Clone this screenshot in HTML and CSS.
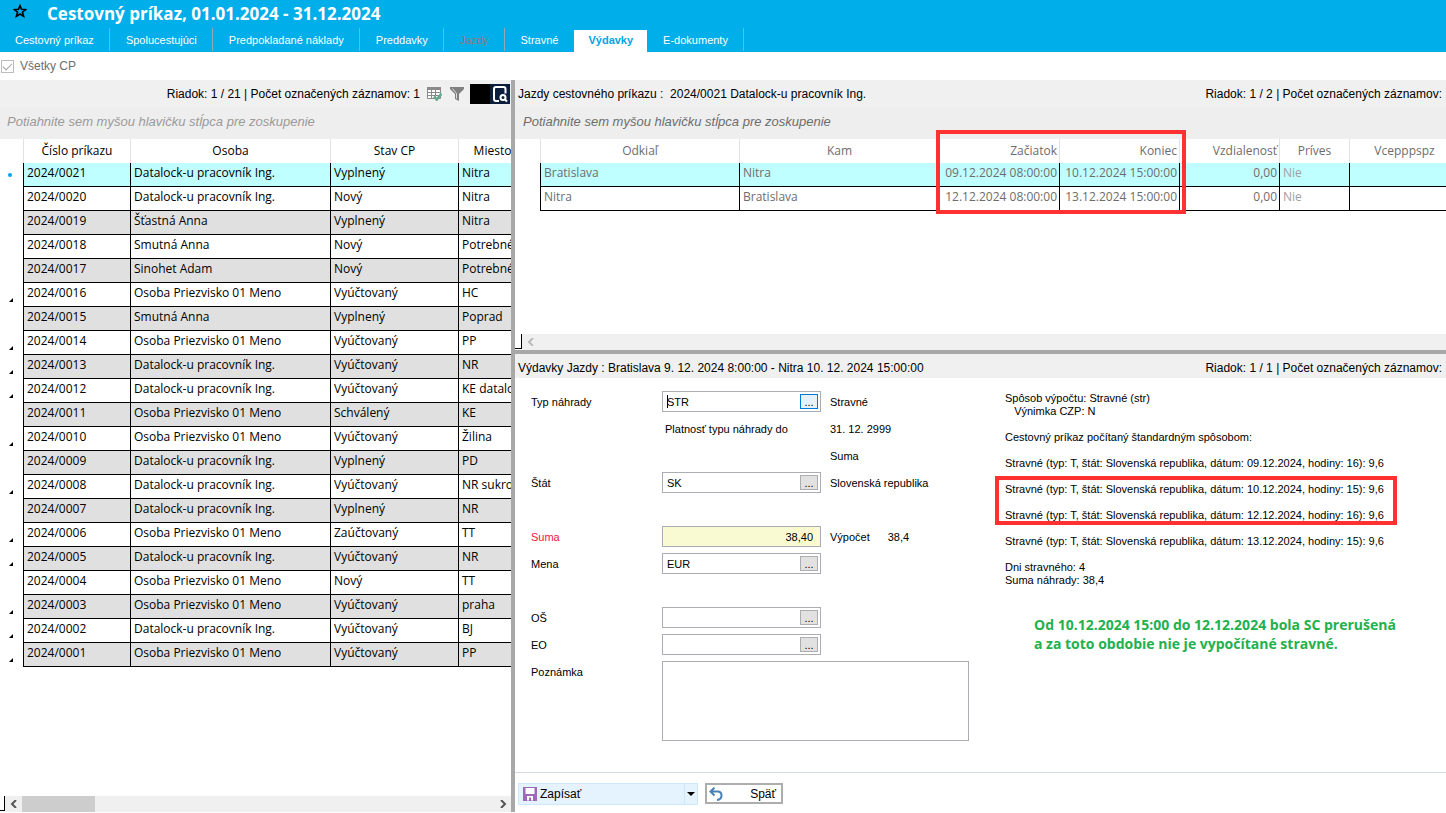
FILE: index.html
```html
<!DOCTYPE html>
<html lang="sk">
<head>
    <meta charset="UTF-8">
    <meta name="viewport" content="width=device-width, initial-scale=1.0">
    <title>Cestovný príkaz</title>
    <link rel="stylesheet" href="styles.css">
</head>
<body>
    <header class="header">
        <div class="title-row">
            <svg class="star" viewBox="0 0 14 14"><path d="M7 1.6 8.5 5.3 12.6 5.6 9.5 8.2 10.6 12.3 7 10 3.4 12.3 4.5 8.2 1.4 5.6 5.5 5.3Z" fill="none" stroke="#000" stroke-width="1.6"/></svg>
            <h1>Cestovný príkaz, 01.01.2024 - 31.12.2024</h1>
        </div>
        <nav class="tabs">
            <a href="#">Cestovný príkaz</a>
            <a href="#">Spolucestujúci</a>
            <a href="#">Predpokladané náklady</a>
            <a href="#">Preddavky</a>
            <a href="#" class="disabled">Jazdy</a>
            <a href="#" class="before-active">Stravné</a>
            <a href="#" class="active">Výdavky</a>
            <a href="#">E-dokumenty</a>
        </nav>
    </header>

    <div class="filter-row">
        <input type="checkbox" id="all-cp" checked disabled>
        <label for="all-cp">Všetky CP</label>
    </div>

    <main class="workspace">
        <section class="orders">
            <div class="status-bar">
                <span class="status-right">Riadok: 1 / 21 | Počet označených záznamov: 1</span>
                <svg class="icon-grid" viewBox="0 0 15 15">
                    <path d="M.5 1.5h13v11H.5z" fill="#fff" stroke="#8a8a8a"/>
                    <path d="M0 1h14v3H0z" fill="#8a8a8a"/>
                    <path d="M.5 6.5h13M.5 9.5h13M4.5 4v8M8.5 4v8" stroke="#8a8a8a" fill="none"/>
                    <path d="M7 10.5 9.8 13.5 14.5 7.500" stroke="#63aa8c" stroke-width="2.6" fill="none"/>
                </svg>
                <svg class="icon-filter" viewBox="0 0 14 14"><path d="M0 0h14v2L9 7v7l-4-2V7L0 2z" fill="#808080"/><path d="M2.5 1.5 6.5 6.5v5" stroke="#ddd" fill="none"/></svg>
                <span class="black-box">
                    <svg viewBox="0 0 20 20"><path d="M0 0h20v20H0z" fill="#0b1f3d"/><path d="M9 17H6Q4 17 4 15V5Q4 3 6 3H13.500Q15.500 3 15.500 5V9.500" fill="none" stroke="#fff" stroke-width="2"/><circle cx="13" cy="13.500" r="2.500" fill="none" stroke="#fff" stroke-width="2"/><path d="m14.500 15 2.500 2.500" stroke="#fff" stroke-width="2"/></svg>
                </span>
            </div>
            <div class="group-bar light">Potiahnite sem myšou hlavičku stĺpca pre zoskupenie</div>
            <div class="table-clip">
                <table class="data orders-table">
                    <colgroup><col class="w23"><col class="w107"><col class="w200"><col class="w128"><col class="w68"></colgroup>
                    <thead>
                        <tr><th></th><th>Číslo príkazu</th><th>Osoba</th><th>Stav CP</th><th>Miesto</th></tr>
                    </thead>
                    <tbody>
                        <tr class="current"><td><span class="dot"></span></td><td>2024/0021</td><td>Datalock-u pracovník Ing.</td><td>Vyplnený</td><td>Nitra</td></tr>
                        <tr><td></td><td>2024/0020</td><td>Datalock-u pracovník Ing.</td><td>Nový</td><td>Nitra</td></tr>
                        <tr><td></td><td>2024/0019</td><td>Šťastná Anna</td><td>Vyplnený</td><td>Nitra</td></tr>
                        <tr><td></td><td>2024/0018</td><td>Smutná Anna</td><td>Nový</td><td>Potrebné</td></tr>
                        <tr><td></td><td>2024/0017</td><td>Sinohet Adam</td><td>Nový</td><td>Potrebné</td></tr>
                        <tr><td><span class="mark"></span></td><td>2024/0016</td><td>Osoba Priezvisko 01 Meno</td><td>Vyúčtovaný</td><td>HC</td></tr>
                        <tr><td></td><td>2024/0015</td><td>Smutná Anna</td><td>Vyplnený</td><td>Poprad</td></tr>
                        <tr><td><span class="mark"></span></td><td>2024/0014</td><td>Osoba Priezvisko 01 Meno</td><td>Vyúčtovaný</td><td>PP</td></tr>
                        <tr><td><span class="mark"></span></td><td>2024/0013</td><td>Datalock-u pracovník Ing.</td><td>Vyúčtovaný</td><td>NR</td></tr>
                        <tr><td><span class="mark"></span></td><td>2024/0012</td><td>Datalock-u pracovník Ing.</td><td>Vyúčtovaný</td><td>KE datalo</td></tr>
                        <tr><td></td><td>2024/0011</td><td>Osoba Priezvisko 01 Meno</td><td>Schválený</td><td>KE</td></tr>
                        <tr><td><span class="mark"></span></td><td>2024/0010</td><td>Osoba Priezvisko 01 Meno</td><td>Vyúčtovaný</td><td>Žilina</td></tr>
                        <tr><td></td><td>2024/0009</td><td>Datalock-u pracovník Ing.</td><td>Vyplnený</td><td>PD</td></tr>
                        <tr><td><span class="mark"></span></td><td>2024/0008</td><td>Datalock-u pracovník Ing.</td><td>Vyúčtovaný</td><td>NR sukro</td></tr>
                        <tr><td></td><td>2024/0007</td><td>Datalock-u pracovník Ing.</td><td>Vyplnený</td><td>NR</td></tr>
                        <tr><td><span class="mark"></span></td><td>2024/0006</td><td>Osoba Priezvisko 01 Meno</td><td>Zaúčtovaný</td><td>TT</td></tr>
                        <tr><td><span class="mark"></span></td><td>2024/0005</td><td>Datalock-u pracovník Ing.</td><td>Vyúčtovaný</td><td>NR</td></tr>
                        <tr><td></td><td>2024/0004</td><td>Osoba Priezvisko 01 Meno</td><td>Nový</td><td>TT</td></tr>
                        <tr><td><span class="mark"></span></td><td>2024/0003</td><td>Osoba Priezvisko 01 Meno</td><td>Vyúčtovaný</td><td>praha</td></tr>
                        <tr><td><span class="mark"></span></td><td>2024/0002</td><td>Datalock-u pracovník Ing.</td><td>Vyúčtovaný</td><td>BJ</td></tr>
                        <tr><td><span class="mark"></span></td><td>2024/0001</td><td>Osoba Priezvisko 01 Meno</td><td>Vyúčtovaný</td><td>PP</td></tr>
                    </tbody>
                </table>
            </div>
            <div class="scroll-row">
                <span class="grip"></span>
                <div class="scrollbar">
                    <button class="arrow" aria-label="Doľava"><svg viewBox="0 0 8 8"><path d="M6 0 2 4l4 4" fill="none" stroke="#555" stroke-width="2"/></svg></button>
                    <span class="thumb"></span>
                    <button class="arrow" aria-label="Doprava"><svg viewBox="0 0 8 8"><path d="m2 0 4 4-4 4" fill="none" stroke="#555" stroke-width="2"/></svg></button>
                </div>
            </div>
        </section>

        <div class="details">
            <section class="trips">
                <div class="status-bar">
                    <span>Jazdy cestovného príkazu :&nbsp; 2024/0021 Datalock-u pracovník Ing.</span>
                    <span class="status-right">Riadok: 1 / 2 | Počet označených záznamov:</span>
                </div>
                <div class="group-bar">Potiahnite sem myšou hlavičku stĺpca pre zoskupenie</div>
                <div class="table-clip">
                    <table class="data trips-table">
                        <colgroup><col class="w25"><col class="w199"><col class="w200"><col class="w120"><col class="w120"><col class="w100"><col class="w70"><col class="w110"></colgroup>
                        <thead>
                            <tr><th></th><th>Odkiaľ</th><th>Kam</th><th class="num">Začiatok</th><th class="num">Koniec</th><th class="num">Vzdialenosť</th><th>Príves</th><th>Vcepppspz</th></tr>
                        </thead>
                        <tbody>
                            <tr class="current"><td></td><td>Bratislava</td><td>Nitra</td><td class="num">09.12.2024 08:00:00</td><td class="num">10.12.2024 15:00:00</td><td class="num">0,00</td><td class="faded">Nie</td><td></td></tr>
                            <tr><td></td><td>Nitra</td><td>Bratislava</td><td class="num">12.12.2024 08:00:00</td><td class="num">13.12.2024 15:00:00</td><td class="num">0,00</td><td class="faded">Nie</td><td></td></tr>
                        </tbody>
                    </table>
                </div>
                <div class="scroll-row">
                    <span class="grip"></span>
                    <div class="scrollbar">
                        <button class="arrow" aria-label="Doľava" disabled><svg viewBox="0 0 8 8"><path d="M6 0 2 4l4 4" fill="none" stroke="#bbb" stroke-width="2"/></svg></button>
                    </div>
                </div>
                <span class="highlight highlight-times"></span>
            </section>

            <section class="expenses">
                <div class="status-bar">
                    <span>Výdavky Jazdy : Bratislava 9. 12. 2024 8:00:00 - Nitra 10. 12. 2024 15:00:00</span>
                    <span class="status-right">Riadok: 1 / 1 | Počet označených záznamov:</span>
                </div>
                <div class="expense-body">
                    <form class="form" id="expense-form">
                        <label for="type">Typ náhrady</label>
                        <div class="field"><span class="caret"></span><input id="type" type="text" value="STR"><button type="button" class="pick focused">...</button></div>
                        <span class="hint">Stravné</span>

                        <span class="sub">Platnosť typu náhrady do</span>
                        <span class="hint">31. 12. 2999</span>

                        <span class="hint">Suma</span>

                        <label for="state">Štát</label>
                        <div class="field"><input id="state" type="text" value="SK"><button type="button" class="pick">...</button></div>
                        <span class="hint">Slovenská republika</span>

                        <span class="blank"></span>

                        <label for="sum" class="required">Suma</label>
                        <div class="field amount"><input id="sum" type="text" value="38,40"></div>
                        <span class="hint pair"><span>Výpočet</span><span>38,4</span></span>

                        <label for="currency">Mena</label>
                        <div class="field"><input id="currency" type="text" value="EUR"><button type="button" class="pick">...</button></div>

                        <span class="blank"></span>

                        <label for="os">OŠ</label>
                        <div class="field"><input id="os" type="text"><button type="button" class="pick">...</button></div>

                        <label for="eo">EO</label>
                        <div class="field"><input id="eo" type="text"><button type="button" class="pick">...</button></div>

                        <label for="note">Poznámka</label>
                        <textarea id="note"></textarea>
                    </form>

                    <div class="calc">
                        <p>Spôsob výpočtu: Stravné (str)<br>&nbsp;&nbsp; Výnimka CZP: N</p>
                        <p>Cestovný príkaz počítaný štandardným spôsobom:</p>
                        <p>Stravné (typ: T, štát: Slovenská republika, dátum: 09.12.2024, hodiny: 16): 9,6</p>
                        <p>Stravné (typ: T, štát: Slovenská republika, dátum: 10.12.2024, hodiny: 15): 9,6</p>
                        <p>Stravné (typ: T, štát: Slovenská republika, dátum: 12.12.2024, hodiny: 16): 9,6</p>
                        <p>Stravné (typ: T, štát: Slovenská republika, dátum: 13.12.2024, hodiny: 15): 9,6</p>
                        <p>Dni stravného: 4<br>Suma náhrady: 38,4</p>
                        <span class="highlight highlight-days"></span>
                        <div class="remark">Od 10.12.2024 15:00 do 12.12.2024 bola SC prerušená<br>a za toto obdobie nie je vypočítané stravné.</div>
                    </div>
                </div>
                <footer class="actions">
                    <div class="save-group">
                        <button class="save" form="expense-form">
                            <svg viewBox="0 0 14 14"><path d="M0 0h14v14H0z" fill="#9b6bb8"/><path d="M2.500 1h9v6h-9zM4 9h6v4.500H8V10.500H6v3H4z" fill="#fff"/></svg>
                            Zapísať
                        </button>
                        <button class="save-more" aria-label="Ďalšie možnosti"></button>
                    </div>
                    <button class="back">
                        <svg viewBox="0 0 14 14"><path d="M5.500.8 1.500 4.600l4 3.800M2 4.600h6.500q4 0 4 4T8 13" fill="none" stroke="#4a80b5" stroke-width="2"/></svg>
                        <span>Späť</span>
                    </button>
                </footer>
            </section>
        </div>
    </main>
</body>
</html>
```
FILE: styles.css
```css
* {
    box-sizing: border-box;
}

body {
    margin: 0;
    min-height: 100vh;
    display: flex;
    flex-direction: column;
    background: #fff;
    color: #000;
    font-family: "Liberation Sans", Arial, sans-serif;
    font-size: 12px;
    padding-bottom: 1px;
}

button,
input,
textarea {
    font: inherit;
    color: inherit;
}

button {
    padding: 0;
    border: none;
    cursor: pointer;
}

/* header */
.header {
    background: #00aeea;
    color: #fff;
}

.title-row {
    display: flex;
    align-items: center;
    height: 28px;
    padding-left: 13px;
    gap: 20px;
}

.star {
    width: 14px;
    height: 14px;
    margin-bottom: 6px;
}

h1 {
    margin: 0;
    font-family: "Open Sans", "Noto Sans", sans-serif;
    font-size: 17px;
    font-weight: 700;
    line-height: 24px;
}

.tabs {
    display: flex;
    gap: 1px;
    height: 24px;
    font-size: 11px;
}

.tabs a {
    padding: 0 15px;
    border-right: 1px solid #8fa9b5;
    margin-bottom: 1px;
    line-height: 24px;
    color: #fff;
    text-decoration: none;
    white-space: nowrap;
}

.tabs a.disabled {
    color: #8a7d7c;
}

.tabs a.before-active {
    border-right: none;
}

.tabs a.active {
    margin: 2px 0 0;
    padding: 0 14px;
    border: none;
    line-height: 20px;
    background: #fff;
    color: #00a5e3;
    font-weight: bold;
}

.filter-row {
    display: flex;
    align-items: center;
    gap: 6px;
    height: 28px;
    color: #6d6d6d;
}

.filter-row input {
    appearance: none;
    width: 13px;
    height: 13px;
    margin: 0 0 0 1px;
    border: 1px solid #bcbcbc;
    display: grid;
    place-items: center;
}

.filter-row input:checked::after {
    content: "";
    width: 8px;
    height: 4px;
    border-left: 1px solid #a0a0a0;
    border-bottom: 1px solid #a0a0a0;
    transform: translateY(-1px) rotate(-45deg);
}

/* panes */
.workspace {
    flex: 1;
    display: grid;
    grid-template-columns: 515px minmax(0, 1fr);
}

.orders {
    display: flex;
    flex-direction: column;
    min-width: 0;
    border-right: 4px solid #a8a8a8;
}

.details {
    display: flex;
    flex-direction: column;
    min-width: 0;
}

.trips {
    position: relative;
    display: flex;
    flex-direction: column;
    min-height: 274px;
    border-bottom: 4px solid #a8a8a8;
}

.expenses {
    flex: 1;
    display: flex;
    flex-direction: column;
}

.status-bar {
    display: flex;
    align-items: center;
    height: 24px;
    padding: 3px 4px 0 3px;
    background: #f0f0f0;
    white-space: nowrap;
}

.trips .status-bar,
.orders .status-bar {
    height: 27px;
    padding-top: 0;
}

.orders .status-bar {
    padding-right: 1px;
}

.status-right {
    margin-left: auto;
}

.icon-grid {
    width: 15px;
    height: 15px;
    margin-left: 7px;
}

.icon-filter {
    width: 14px;
    height: 14px;
    margin-left: 8px;
}

.black-box {
    display: flex;
    justify-content: flex-end;
    width: 40px;
    height: 20px;
    margin-left: 6px;
    background: #000;
}

.black-box svg {
    width: 20px;
    height: 20px;
}

.group-bar {
    height: 32px;
    padding-left: 8px;
    line-height: 29px;
    background: #eee;
    color: #6d6d6d;
    font-size: 13px;
    font-style: italic;
    white-space: nowrap;
}

.group-bar.light {
    padding-left: 7px;
    color: #9a9a9a;
}

.table-clip {
    flex: 1;
    overflow: hidden;
}

/* data tables */
.data {
    width: 0;
    table-layout: fixed;
    border-collapse: separate;
    border-spacing: 0;
    font-family: "Open Sans", "Noto Sans", sans-serif;
    font-size: 12px;
}

.w23 { width: 23px; }
.w25 { width: 25px; }
.w68 { width: 68px; }
.w70 { width: 70px; }
.w100 { width: 100px; }
.w107 { width: 107px; }
.w110 { width: 110px; }
.w120 { width: 120px; }
.w128 { width: 128px; }
.w199 { width: 199px; }
.w200 { width: 200px; }

.data th,
.data td {
    height: 24px;
    padding: 0 3px;
    overflow: hidden;
    white-space: nowrap;
}

.data th {
    padding-bottom: 2px;
    border-left: 1px solid #e2e2e2;
    font-weight: normal;
    text-align: center;
}

.data td {
    padding-bottom: 3px;
    border-left: 1px solid #000;
    border-bottom: 1px solid #000;
    line-height: 20px;
}

.data th:first-child,
.data td:first-child {
    padding: 0;
    border: none;
    background: #fff;
}

.data .num {
    padding-right: 2px;
    text-align: right;
}

.data tbody tr:nth-child(odd) td:not(:first-child) {
    background: #e0e0e0;
}

.data tbody tr.current td:not(:first-child) {
    background: #c0ffff;
}

.trips-table {
    color: #6d6d6d;
}

.data .faded {
    color: #a0a0a0;
}

.dot {
    display: block;
    width: 4px;
    height: 4px;
    margin-left: 8px;
    border-radius: 50%;
    background: #00a2e8;
}

.mark {
    display: block;
    width: 0;
    height: 0;
    margin: 9px 0 0 9px;
    border-left: 4px solid transparent;
    border-bottom: 4px solid #000;
}

/* scrollbars */
.scroll-row {
    display: flex;
    align-items: stretch;
    height: 16px;
}

.grip {
    width: 5px;
    height: 15px;
    border-right: 1px solid #000;
    border-bottom: 1px solid #000;
}

.trips .grip {
    width: 7px;
}

.scrollbar {
    flex: 1;
    display: flex;
    background: #f0f0f0;
}

.arrow {
    display: grid;
    place-items: center;
    width: 17px;
    background: none;
}

.arrow:last-child:not(:first-child) {
    margin-left: auto;
}

.arrow svg {
    width: 8px;
    height: 8px;
}

.thumb {
    width: 73px;
    background: #cdcdcd;
}

/* expense form */
.expense-body {
    flex: 1;
    display: flex;
    align-items: flex-start;
    padding: 13px 0 20px 16px;
    font-size: 11px;
}

.form {
    display: grid;
    grid-template-columns: 131px 159px 184px;
    grid-auto-rows: 21px;
    row-gap: 6px;
    line-height: 22px;
    white-space: nowrap;
}

.form label {
    grid-column: 1;
}

.form .required {
    color: #f0143c;
}

.field {
    grid-column: 2;
    position: relative;
    display: flex;
    align-items: center;
    padding: 0 2px 0 4px;
    border: 1px solid #abadb3;
    background: #fff;
}

.field input {
    flex: 1;
    min-width: 0;
    padding: 0;
    border: none;
    outline: none;
    background: none;
}

.caret {
    position: absolute;
    left: 4px;
    top: 3px;
    width: 1px;
    height: 13px;
    background: #000;
}

.amount {
    padding-right: 7px;
    background: #fafad2;
}

.amount input {
    text-align: right;
}

.pick {
    width: 18px;
    height: 15px;
    border: 1px solid #adadad;
    background: #e1e1e1;
    line-height: 12px;
}

.pick.focused {
    border-color: #0078d7;
    background: #e5f1fb;
}

.hint {
    grid-column: 3;
    padding-left: 9px;
}

.pair {
    display: flex;
    gap: 18px;
}

.sub {
    grid-column: 2;
    padding-left: 3px;
}

.blank {
    grid-column: 1 / -1;
}

#note {
    grid-column: 2 / 4;
    width: 307px;
    height: 80px;
    border: 1px solid #abadb3;
    outline: none;
    resize: none;
}

.calc {
    position: relative;
    padding-top: 1px;
    line-height: 13px;
    white-space: nowrap;
}

.calc p {
    margin: 0 0 13px;
}

.remark {
    margin: 28px 0 0 29px;
    color: #22b14c;
    font-family: "Open Sans", "Noto Sans", sans-serif;
    font-size: 14px;
    font-weight: 700;
    line-height: 19px;
}

/* red annotation frames lie over the content */
.highlight {
    position: absolute;
    border: 4px solid #ff3131;
    pointer-events: none;
}

.highlight-times {
    left: 421px;
    top: 50px;
    width: 250px;
    height: 84px;
}

.highlight-days {
    left: -10px;
    top: 85px;
    width: 402px;
    height: 49px;
}

/* bottom buttons */
.actions {
    display: flex;
    align-items: center;
    gap: 7px;
    height: 40px;
    padding: 2px 3px 0;
    border-top: 1px solid #d3dfe8;
}

.save-group {
    display: flex;
    width: 180px;
    height: 22px;
    border: 1px solid #cce8ff;
    background: #e5f3ff;
}

.save {
    flex: 1;
    display: flex;
    align-items: center;
    gap: 3px;
    padding-left: 4px;
    background: none;
}

.save svg,
.back svg {
    width: 14px;
    height: 14px;
}

.save-more {
    display: grid;
    place-items: center;
    width: 13px;
    border-left: 1px solid #cce8ff;
    background: none;
}

.save-more::after {
    content: "";
    border: 4px solid transparent;
    border-top-color: #000;
    border-bottom: none;
}

.back {
    display: flex;
    align-items: center;
    justify-content: space-between;
    width: 78px;
    height: 21px;
    padding: 0 5px 0 2px;
    border: 2px solid #adadad;
    background: #fff;
}
```
